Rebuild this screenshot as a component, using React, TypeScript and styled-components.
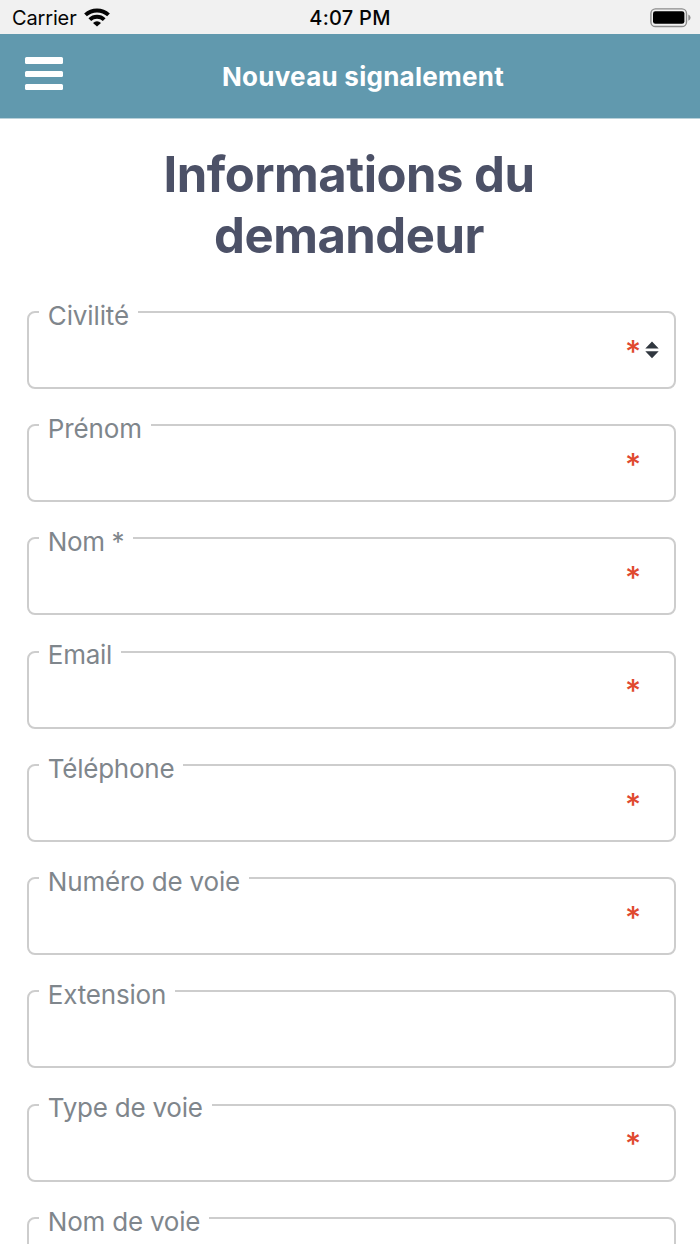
import React from "react";
import styled, { createGlobalStyle } from "styled-components";

const GlobalStyle = createGlobalStyle`
  * { box-sizing: border-box; }
  body {
    margin: 0;
    background: #ffffff;
    font-family: Inter, "Liberation Sans", sans-serif;
  }
`;

const Screen = styled.div`
  width: 700px;
  height: 1244px;
  overflow: hidden;
  background: #ffffff;
`;

const StatusBar = styled.div`
  height: 34px;
  padding: 2px 8px 0 12px;
  display: grid;
  grid-template-columns: 1fr auto 1fr;
  align-items: center;
  background: #f1f1f1;
  color: #050505;
`;

const Carrier = styled.div`
  display: flex;
  align-items: center;
  gap: 7.5px;
  font-size: 20px;
  line-height: 30px;
  letter-spacing: -0.15px;
`;

const Clock = styled.time`
  margin-left: -4px;
  font-size: 20px;
  font-weight: 500;
  line-height: 30px;
  letter-spacing: 0.25px;
`;

const Battery = styled.svg`
  justify-self: end;
  display: block;
`;

const Header = styled.header`
  height: 85px;
  padding: 0 25px;
  display: grid;
  grid-template-columns: 38px 1fr 12px;
  align-items: center;
  background: #6199ae;
  border-bottom: 1px solid #b9d1da;
`;

const MenuButton = styled.button`
  width: 38px;
  height: 33px;
  margin: 0 0 4.6px;
  padding: 0;
  border: 0;
  background: none;
  display: flex;
  flex-direction: column;
  justify-content: space-between;
`;

const MenuBar = styled.span`
  width: 38px;
  height: 6.4px;
  border-radius: 1.5px;
  background: #ffffff;
`;

const HeaderTitle = styled.div`
  margin-top: 2.4px;
  text-align: center;
  color: #ffffff;
  font-size: 26px;
  font-weight: 700;
  line-height: 32px;
  letter-spacing: 0.26px;
  white-space: nowrap;
`;

const Title = styled.h1`
  margin: 25px 2px 0 0;
  color: #4c5167;
  font-size: 49px;
  font-weight: 700;
  line-height: 61px;
  text-align: center;
`;

const TitleLine = styled.span<{ $spacing: number }>`
  display: block;
  letter-spacing: ${(p) => p.$spacing}px;
`;

const Form = styled.form`
  margin: 45px 24px 0 27px;
  display: flex;
  flex-direction: column;
  gap: 35.22px;
`;

const Field = styled.div`
  height: 78px;
  flex: none;
  display: flex;
  flex-direction: column;
  align-items: flex-start;
  border: 2px solid #cdcdcd;
  border-radius: 8px;
`;

const Label = styled.label<{ $spacing: number }>`
  margin: -13.2px 0 0 10px;
  padding: 0 9px 0 8.8px;
  background: #ffffff;
  color: #7f868c;
  font-size: 26px;
  line-height: 32px;
  letter-spacing: ${(p) => p.$spacing}px;
  white-space: nowrap;
`;

const Marks = styled.div`
  align-self: stretch;
  height: 36px;
  padding-right: 15px;
  display: flex;
  justify-content: flex-end;
  align-items: center;
  gap: 6px;
`;

const Required = styled.span`
  width: 14px;
  text-align: center;
  color: #e0492f;
  font-size: 31px;
  font-weight: 500;
  line-height: 40px;
  height: 36px;
`;

const Chevrons = styled.svg`
  width: 14px;
  height: 18px;
`;

interface FieldSpec {
  label: string;
  spacing: number;
  required?: boolean;
  select?: boolean;
}

const fields: FieldSpec[] = [
  { label: "Civilité", spacing: -0.12, required: true, select: true },
  { label: "Prénom", spacing: -0.12, required: true },
  { label: "Nom *", spacing: -0.4, required: true },
  { label: "Email", spacing: -0.25, required: true },
  { label: "Téléphone", spacing: -0.25, required: true },
  { label: "Numéro de voie", spacing: -0.18, required: true },
  { label: "Extension", spacing: -0.2 },
  { label: "Type de voie", spacing: -0.24, required: true },
  { label: "Nom de voie", spacing: -0.22 },
];

const WifiIcon = () => (
  <svg width="26" height="20" viewBox="0 0 26 20">
    <g fill="none" stroke="#050505" strokeWidth="4">
      <path d="M1.5 6.9 A17 17 0 0 1 24.5 6.9" />
      <path d="M5.8 11.6 A10.6 10.6 0 0 1 20.2 11.6" />
    </g>
    <path d="M13 18.6 L9 14.9 A5.8 5.8 0 0 1 17 14.9 Z" fill="#050505" />
  </svg>
);

const BatteryIcon = () => (
  <Battery width="42" height="20" viewBox="0 0 42 20">
    <rect x="0.9" y="0.9" width="35.6" height="17.6" rx="4.6" fill="#f1f1f1" stroke="#8c8c8c" strokeWidth="1.4" />
    <rect x="3" y="3.2" width="31.4" height="12.6" rx="2.4" fill="#000000" />
    <path d="M38.3 6.6 Q40.6 7.5 40.6 9.7 Q40.6 11.9 38.3 12.8 Z" fill="#8c8c8c" />
  </Battery>
);

export default function App() {
  return (
    <Screen>
      <GlobalStyle />
      <StatusBar>
        <Carrier>
          Carrier
          <WifiIcon />
        </Carrier>
        <Clock>4:07 PM</Clock>
        <BatteryIcon />
      </StatusBar>
      <Header>
        <MenuButton type="button" aria-label="Menu">
          <MenuBar />
          <MenuBar />
          <MenuBar />
        </MenuButton>
        <HeaderTitle>Nouveau signalement</HeaderTitle>
      </Header>
      <Title>
        <TitleLine $spacing={-0.5}>Informations du</TitleLine>
        <TitleLine $spacing={-0.5}>demandeur</TitleLine>
      </Title>
      <Form>
        {fields.map((f) => (
          <Field key={f.label}>
            <Label $spacing={f.spacing}>{f.label}</Label>
            <Marks>
              {f.required && <Required>*</Required>}
              {f.select ? (
                <Chevrons viewBox="0 0 14 18">
                  <path d="M0.3 7.4 L7 0.4 L13.7 7.4 Z M0.3 10.2 L7 17.2 L13.7 10.2 Z" fill="#30373f" />
                </Chevrons>
              ) : (
                <Chevrons viewBox="0 0 14 18" />
              )}
            </Marks>
          </Field>
        ))}
      </Form>
    </Screen>
  );
}
